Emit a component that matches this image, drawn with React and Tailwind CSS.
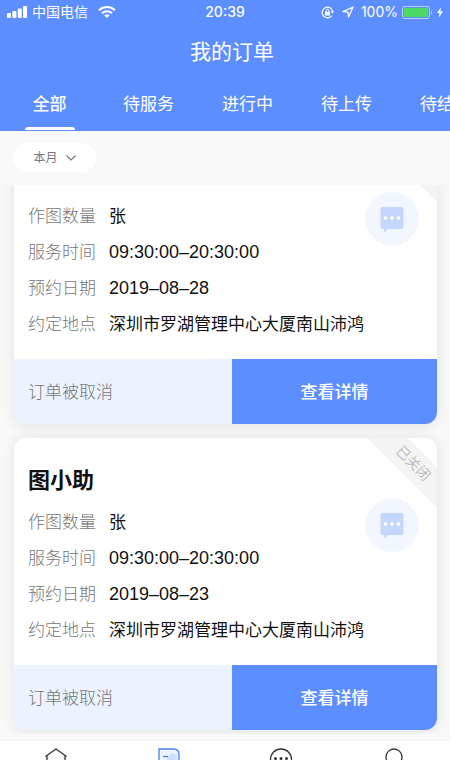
import React from "react";

const tabs = ["全部", "待服务", "进行中", "待上传", "待结算"];

const orders = [
  { name: "图小助", date: "2019–08–28", scrolledOut: true },
  { name: "图小助", date: "2019–08–23" },
];

function StatusBar() {
  return (
    <div className="grid h-6 grid-cols-[1fr_auto_1fr] items-center pr-[7px] pl-[7px] text-sm">
      <div className="flex items-center">
        <svg className="h-3 w-5" viewBox="0 0 20 12" fill="currentColor" aria-hidden="true">
          <rect x="0" y="7" width="4" height="5" rx="1" />
          <rect x="5.4" y="5" width="4" height="7" rx="1" />
          <rect x="10.8" y="2.5" width="4" height="9.5" rx="1" />
          <rect x="16" y="0" width="4" height="12" rx="1" />
        </svg>
        <span className="ml-[5px]">中国电信</span>
        <svg className="ml-[10px] h-3 w-[18px]" viewBox="0 0 18 12" fill="none" stroke="currentColor" strokeWidth="2.1" aria-hidden="true">
          <path d="M1 4.2C5.5 0 12.500 0 17 4.200" />
          <path d="M4 7.200C6.800 4.500 11.200 4.500 14 7.200" />
          <path d="M6.300 9.300C7.900 7.900 10.100 7.900 11.700 9.300L9 12Z" fill="currentColor" stroke="none" />
        </svg>
      </div>
      <span className="font-medium">20:39</span>
      <div className="flex items-center justify-end">
        <svg className="h-[13px] w-[13px]" viewBox="0 0 13 13" fill="none" stroke="currentColor" aria-hidden="true">
          <path d="M10.800 9.600A5.300 5.300 0 1 1 11.700 5.500" strokeWidth="1.200" />
          <path d="M9.700 5.300L13 5.300L11.500 7.800Z" fill="currentColor" stroke="none" />
          <rect x="4" y="5.800" width="5" height="3.700" rx="0.500" fill="currentColor" stroke="none" />
          <path d="M5 6V4.800A1.500 1.500 0 0 1 8 4.800V6" />
        </svg>
        <svg className="ml-2 h-3 w-3" viewBox="0 0 12 12" fill="none" stroke="currentColor" strokeWidth="1.200" strokeLinejoin="round" aria-hidden="true">
          <path d="M11 1L1 5.600L6 6.100L6.600 11Z" />
        </svg>
        <span className="ml-[7px]">100%</span>
        <svg className="ml-1 h-[13px] w-[31px]" viewBox="0 0 31 13" fill="none" aria-hidden="true">
          <rect x="0.500" y="0.500" width="27" height="12" rx="2.500" stroke="#b5d2ff" />
          <rect x="2" y="2" width="24" height="9" rx="1" fill="#4cd964" />
          <path d="M29 4.500C30.500 5 30.500 8 29 8.500Z" fill="#b5d2ff" />
        </svg>
        <svg className="ml-1 h-[11px] w-[6px]" viewBox="0 0 7 12" fill="currentColor" aria-hidden="true">
          <path d="M4.800 0L0 6.700H3L2 12L7 4.900H4Z" />
        </svg>
      </div>
    </div>
  );
}

function OrderCard({ name, date, scrolledOut }) {
  const rows = [
    ["作图数量", "张"],
    ["服务时间", "09:30:00–20:30:00"],
    ["预约日期", date],
    ["约定地点", "深圳市罗湖管理中心大厦南山沛鸿"],
  ];
  return (
    <article className="shrink-0 rounded-xl bg-white shadow-[0_1px_14px_rgba(0,0,0,0.10)]">
      <div className="relative overflow-hidden rounded-xl">
        <h2 className={scrolledOut ? "invisible h-[60px]" : "h-[60px] px-[14px] pt-6 text-[22px] leading-9 font-bold text-[#111]"}>
          {scrolledOut ? null : name}
        </h2>
        <div className="absolute top-[11px] -right-[46px] h-[29px] w-[140px] rotate-45 bg-[#f4f4f4] text-center text-sm leading-[27px] text-[#bdbdbd]">
          {scrolledOut ? null : "已关闭"}
        </div>
        <div className="flex justify-between pr-[18px] pb-[17px] pl-[14px]">
          <dl className="pt-[6px] text-[17px] leading-9">
            {rows.map(([label, value]) => (
              <div key={label} className="flex h-9 gap-[13px]">
                <dt className="font-light text-[#777]">{label}</dt>
                <dd
                  className={
                    /^\d/.test(value)
                      ? "font-['Liberation_Sans',Arial,sans-serif] text-lg leading-9 whitespace-nowrap text-[#111]"
                      : "whitespace-nowrap text-[#111]"
                  }
                >
                  {value}
                </dd>
              </div>
            ))}
          </dl>
          <button type="button" aria-label="消息" className="-ml-6 flex h-[54px] w-[54px] shrink-0 items-center justify-center rounded-full bg-[#f1f6ff]">
            <svg className="h-[25px] w-6" viewBox="0 0 24 25" aria-hidden="true">
              <path d="M2.500 0H21.500Q23.500 0 23.500 2V20Q23.500 22 21.500 22H8L4 25.500V22H2.500Q0.500 22 0.500 20V2Q0.500 0 2.500 0Z" fill="#c5d6fc" />
              <g fill="#fff">
                <circle cx="5.500" cy="11" r="1.800" />
                <circle cx="12" cy="11" r="1.800" />
                <circle cx="18.500" cy="11" r="1.800" />
              </g>
            </svg>
          </button>
        </div>
        <footer className="grid grid-cols-[218fr_205fr] text-[17px] leading-[63px]">
          <p className="bg-[#edf2ff] pt-0.5 pl-[14px] font-light text-[#777]">订单被取消</p>
          <button type="button" className="bg-[#5d8eff] pt-0.5 font-medium text-white">查看详情</button>
        </footer>
      </div>
    </article>
  );
}

function BottomNav() {
  return (
    <nav className="grid h-5 shrink-0 grid-cols-4 overflow-hidden border-t border-[#f2f2f2] bg-white text-[#333]">
      <a href="#home" aria-label="首页" className="flex justify-center pt-[7px]">
        <svg className="h-6 w-6" viewBox="0 0 24 24" fill="none" stroke="currentColor" strokeWidth="1.300" strokeLinejoin="round">
          <path d="M1.500 8.500L12 1L22.500 8.500M3 7.500V22H21V7.500" />
        </svg>
      </a>
      <a href="#orders" aria-label="订单" className="flex justify-center pt-[7px]">
        <svg className="h-6 w-6" viewBox="0 0 24 24" fill="none" stroke="#4c7fe8" strokeWidth="1.300">
          <path d="M2 1H17Q22 1 22 7V23H2Z" fill="#edf3ff" />
          <path d="M10 9L15 5L20 7V23H10Z" fill="#cfdfff" stroke="none" />
          <path d="M6 8.500H11" />
        </svg>
      </a>
      <a href="#messages" aria-label="消息" className="flex justify-center pt-[7px]">
        <svg className="h-6 w-6" viewBox="0 0 24 24" fill="none" stroke="currentColor" strokeWidth="1.300">
          <circle cx="12" cy="11.500" r="10.500" />
          <g fill="currentColor" stroke="none">
            <circle cx="6.500" cy="10.500" r="1.500" />
            <circle cx="12" cy="10.500" r="1.500" />
            <circle cx="17.500" cy="10.500" r="1.500" />
          </g>
        </svg>
      </a>
      <a href="#profile" aria-label="我的" className="flex justify-center pt-[7px]">
        <svg className="h-6 w-6" viewBox="0 0 24 24" fill="none" stroke="currentColor" strokeWidth="1.300">
          <circle cx="12" cy="9" r="8" />
          <path d="M3 24Q4 18 9 16.500M21 24Q20 18 15 16.500" />
        </svg>
      </a>
    </nav>
  );
}

export default function App() {
  return (
    <div className="flex h-screen flex-col overflow-hidden bg-[#f9f9f9] font-['Inter','Noto_Sans_CJK_SC',sans-serif]">
      <header className="shrink-0 bg-[#5d8eff] text-white">
        <StatusBar />
        <h1 className="pl-[14px] text-center text-[21px] leading-[56px]">我的订单</h1>
        <nav className="flex overflow-hidden pb-px">
          {tabs.map((tab, i) => (
            <a
              key={tab}
              href={"#tab" + i}
              className={
                i === 0
                  ? "flex w-[99px] shrink-0 flex-col items-center text-[17px] leading-[49px] font-medium after:-mt-0.5 after:h-[3px] after:w-[50px] after:rounded-t-sm after:bg-white"
                  : "w-[99px] shrink-0 text-center text-[17px] leading-[49px]"
              }
            >
              {tab}
            </a>
          ))}
        </nav>
      </header>
      <div className="shrink-0 px-[13px] pt-3 pb-[13px]">
        <button type="button" className="flex h-[29px] w-[83px] items-center justify-center gap-2 rounded-full bg-white text-xs text-[#777]">
          本月
          <svg className="h-[6px] w-[10px]" viewBox="0 0 10 6" fill="none" stroke="currentColor" strokeWidth="1.200">
            <path d="M0.500 0.500L5 5L9.500 0.500" />
          </svg>
        </button>
      </div>
      <main className="mb-[6px] flex min-h-0 flex-1 flex-col justify-end gap-[14px] overflow-hidden pr-[13px] pb-1 pl-[14px]">
        {orders.map((order) => (
          <OrderCard key={order.date} {...order} />
        ))}
      </main>
      <BottomNav />
    </div>
  );
}
